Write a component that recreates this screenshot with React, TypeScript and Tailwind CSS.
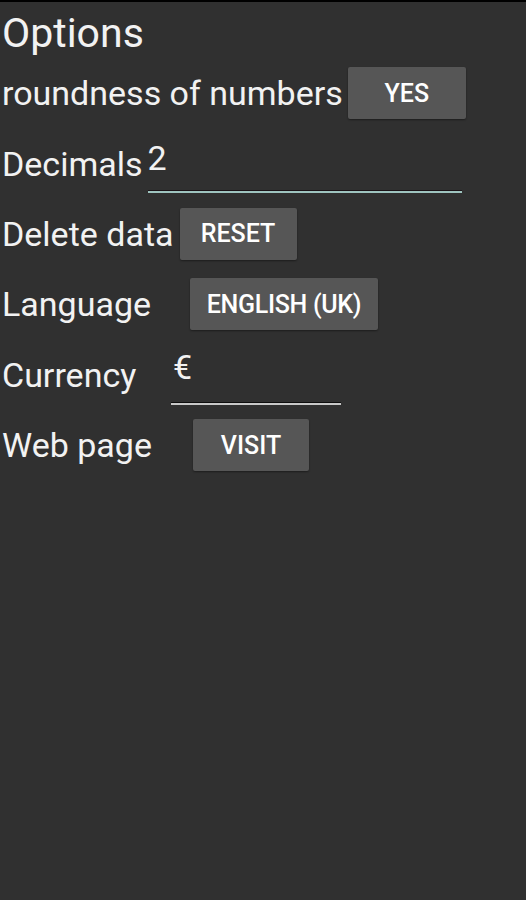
import React from "react";

const Btn = ({ children, className = "" }: { children: React.ReactNode; className?: string }) => (
  <div
    className={`h-[52px] flex items-center justify-center whitespace-nowrap rounded-[2px] bg-[#565656] text-white font-medium text-[25px] leading-none shadow-[0_1px_2px_rgba(0,0,0,0.4)] ${className}`}
  >
    {children}
  </div>
);

export default function App() {
  return (
    <div
      className="w-[526px] h-[900px] bg-[#303030] text-[#f2f2f2] border-t-2 border-black overflow-hidden"
      style={{ fontFamily: "Roboto, 'Liberation Sans', sans-serif" }}
    >
      <div className="pl-[2px] flex flex-col">
        <div className="h-[56px] flex items-center text-[41px] leading-none pt-[6px]">Options</div>
        <div className="h-[70.4px] flex items-center text-[34px] leading-none">
          <span>roundness of numbers</span>
          <Btn className="ml-[5px] w-[118px]">YES</Btn>
        </div>
        <div className="h-[70.4px] flex items-center text-[34px] leading-none">
          <span>Decimals</span>
          <div className="ml-[5px] w-[314px] h-[48px] relative flex items-center">
            <span className="text-[34px] leading-none relative -top-[6px]">2</span>
            <div className="absolute left-0 right-0 top-[50px] h-[1px] bg-[#1a1216]" />
            <div className="absolute left-0 right-0 top-[51px] h-[2px] bg-[#9ec4bf]" />
          </div>
        </div>
        <div className="h-[70.4px] flex items-center text-[34px] leading-none">
          <span>Delete data</span>
          <Btn className="ml-[6px] w-[117px]">RESET</Btn>
        </div>
        <div className="h-[70.4px] flex items-center text-[34px] leading-none">
          <span className="w-[188px] shrink-0">Language</span>
          <Btn className="w-[188px] tracking-[-0.3px]">ENGLISH (UK)</Btn>
        </div>
        <div className="h-[70.4px] flex items-center text-[34px] leading-none">
          <span className="w-[169px] shrink-0">Currency</span>
          <div className="w-[170px] h-[48px] relative flex items-center">
            <span className="text-[34px] leading-none ml-[2px] relative -top-[8px]">€</span>
            <div className="absolute left-0 right-0 top-[51px] h-[1px] bg-[#0d0d0d]" />
            <div className="absolute left-0 right-0 top-[52px] h-[2px] bg-[#c8c8c8]" />
          </div>
        </div>
        <div className="h-[70.4px] flex items-center text-[34px] leading-none">
          <span className="w-[191px] shrink-0">Web page</span>
          <Btn className="w-[116px]">VISIT</Btn>
        </div>
      </div>
    </div>
  );
}
